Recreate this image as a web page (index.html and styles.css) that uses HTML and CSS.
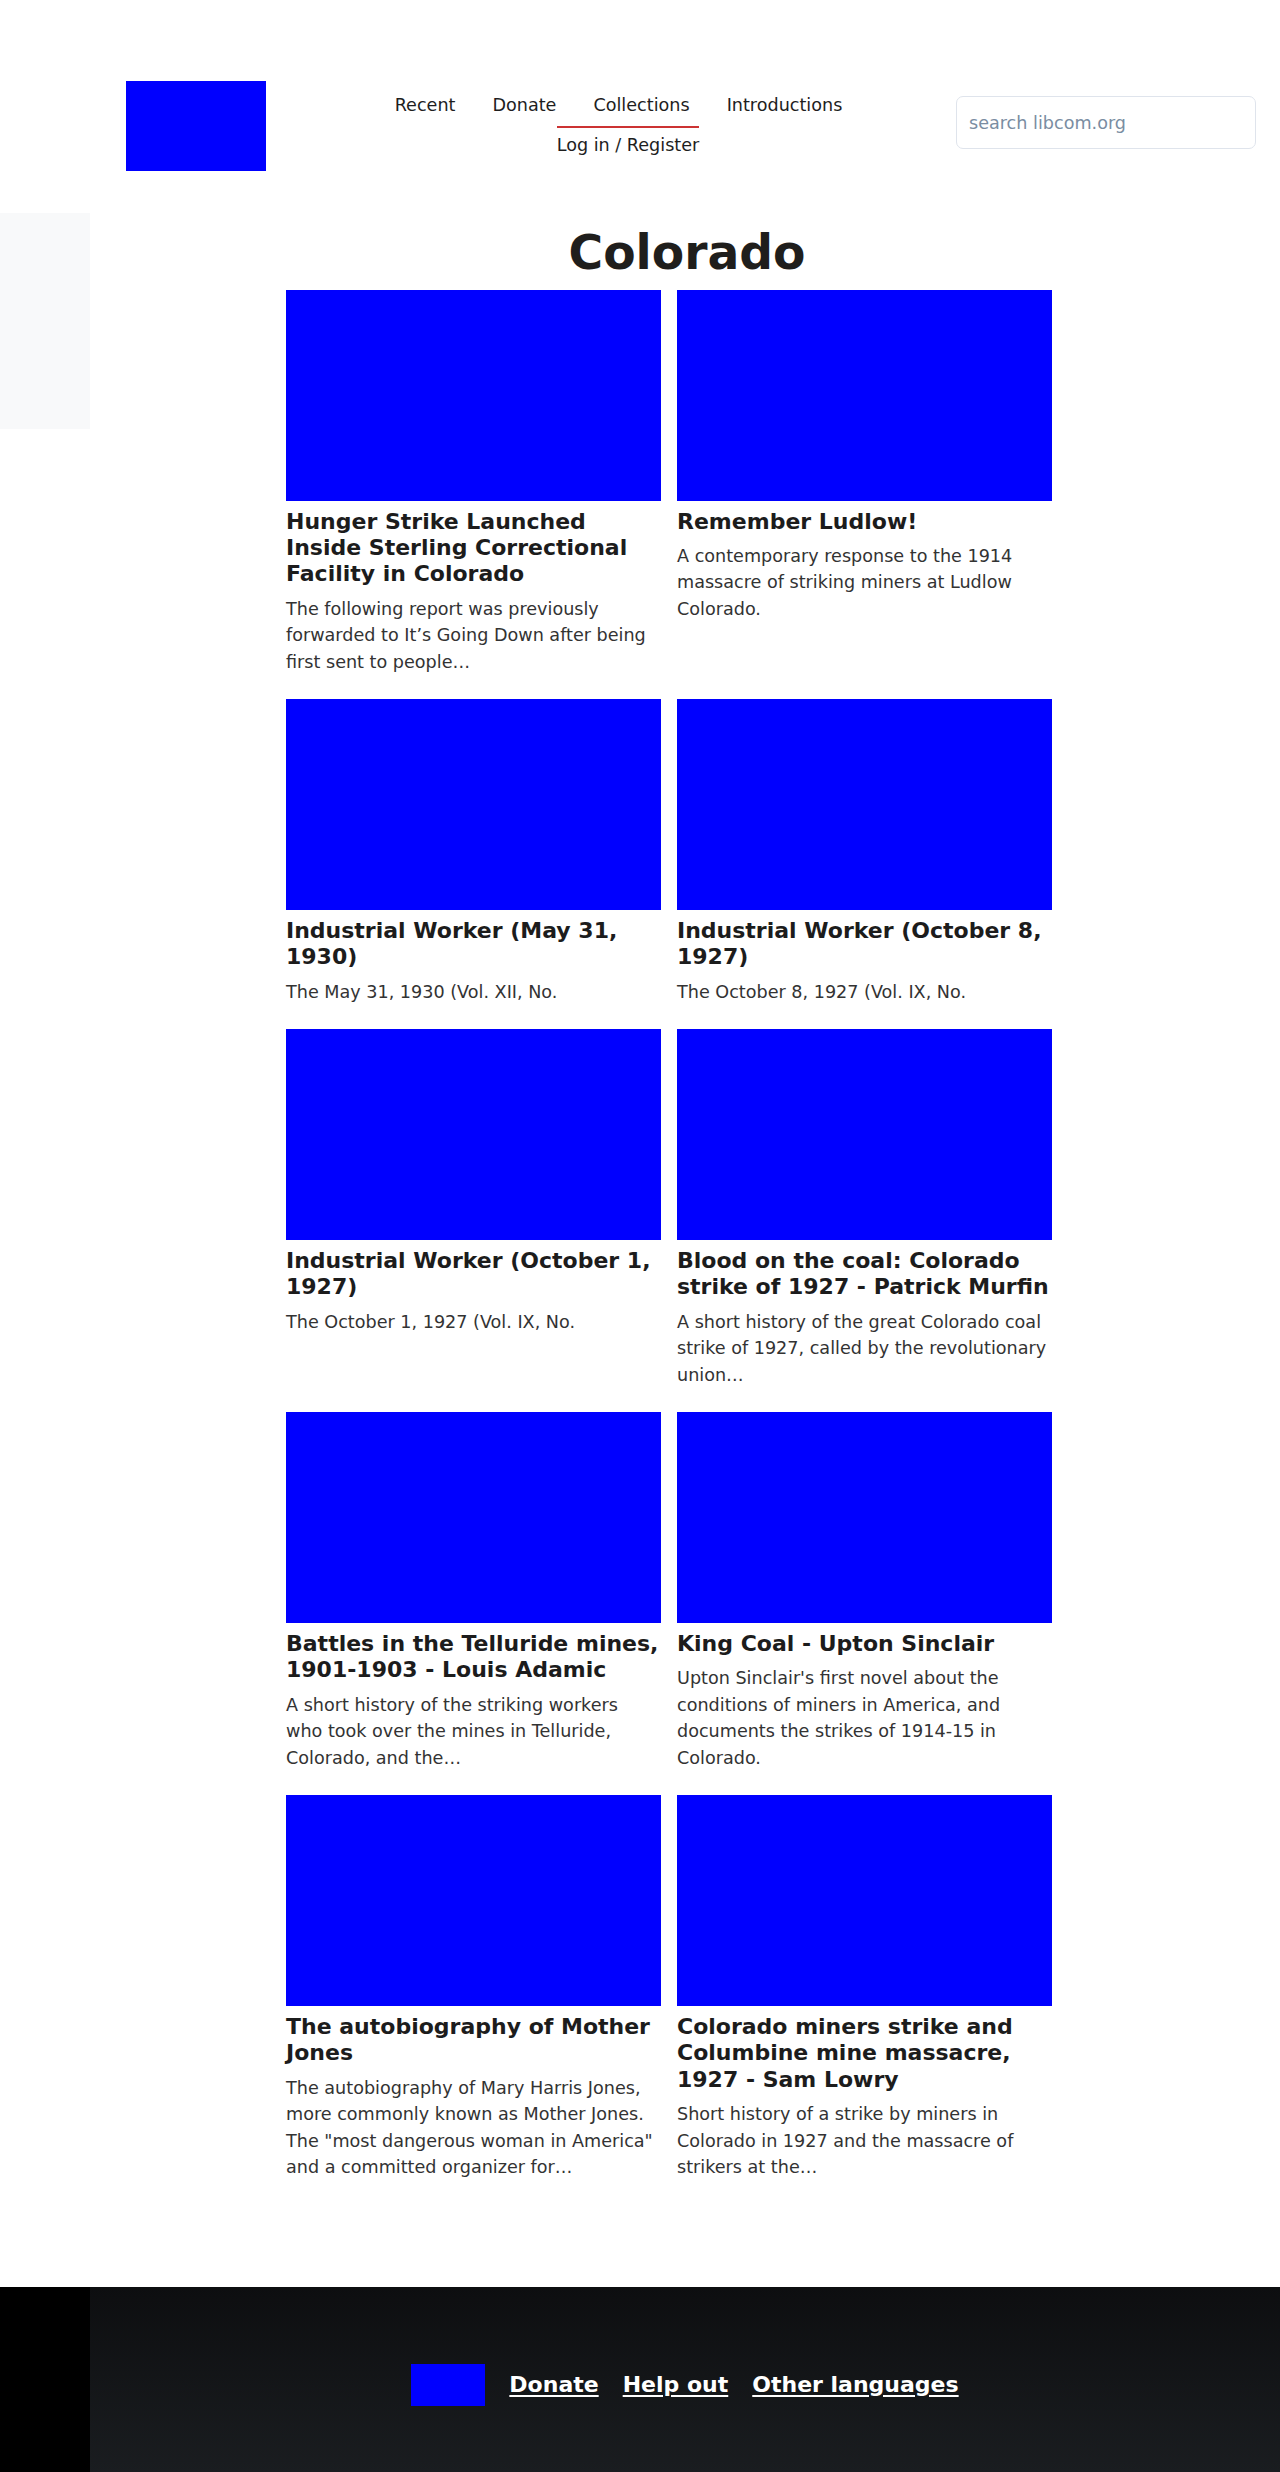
FILE: index.html
```html
<!DOCTYPE html>
<html lang="en">
<head>
<meta charset="utf-8">
<title>Colorado | libcom.org</title>
<link rel="stylesheet" href="styles.css">
</head>
<body>
<header class="site-header">
  <a class="logo" href="#" aria-label="libcom.org"></a>
  <nav class="nav">
    <ul class="nav-main">
      <li><a href="#">Recent</a></li>
      <li><a href="#">Donate</a></li>
      <li><a href="#">Collections</a></li>
      <li><a href="#">Introductions</a></li>
    </ul>
    <a class="nav-account" href="#">Log in / Register</a>
  </nav>
  <form class="search">
    <input class="search-input" type="text" placeholder="search libcom.org">
  </form>
</header>

<div class="page">
  <aside class="sidebar"></aside>
  <main class="main">
    <h1 class="page-title">Colorado</h1>
    <div class="cards">
      <article class="card">
        <div class="card-img"></div>
        <h2 class="card-title">Hunger Strike Launched Inside Sterling Correctional Facility in Colorado</h2>
        <p class="card-text">The following report was previously forwarded to It’s Going Down after being first sent to people…</p>
      </article>
      <article class="card">
        <div class="card-img"></div>
        <h2 class="card-title">Remember Ludlow!</h2>
        <p class="card-text">A contemporary response to the 1914 massacre of striking miners at Ludlow Colorado.</p>
      </article>
      <article class="card">
        <div class="card-img"></div>
        <h2 class="card-title">Industrial Worker (May 31, 1930)</h2>
        <p class="card-text">The May 31, 1930 (Vol. XII, No.</p>
      </article>
      <article class="card">
        <div class="card-img"></div>
        <h2 class="card-title">Industrial Worker (October 8, 1927)</h2>
        <p class="card-text">The October 8, 1927 (Vol. IX, No.</p>
      </article>
      <article class="card">
        <div class="card-img"></div>
        <h2 class="card-title">Industrial Worker (October 1, 1927)</h2>
        <p class="card-text">The October 1, 1927 (Vol. IX, No.</p>
      </article>
      <article class="card">
        <div class="card-img"></div>
        <h2 class="card-title">Blood on the coal: Colorado strike of 1927 - Patrick Murfin</h2>
        <p class="card-text">A short history of the great Colorado coal strike of 1927, called by the revolutionary union…</p>
      </article>
      <article class="card">
        <div class="card-img"></div>
        <h2 class="card-title">Battles in the Telluride mines, 1901-1903 - Louis Adamic</h2>
        <p class="card-text">A short history of the striking workers who took over the mines in Telluride, Colorado, and the…</p>
      </article>
      <article class="card">
        <div class="card-img"></div>
        <h2 class="card-title">King Coal - Upton Sinclair</h2>
        <p class="card-text">Upton Sinclair's first novel about the conditions of miners in America, and documents the strikes of 1914-15 in Colorado.</p>
      </article>
      <article class="card">
        <div class="card-img"></div>
        <h2 class="card-title">The autobiography of Mother Jones</h2>
        <p class="card-text">The autobiography of Mary Harris Jones, more commonly known as Mother Jones. The "most dangerous woman in America" and a committed organizer for…</p>
      </article>
      <article class="card">
        <div class="card-img"></div>
        <h2 class="card-title">Colorado miners strike and Columbine mine massacre, 1927 - Sam Lowry</h2>
        <p class="card-text">Short history of a strike by miners in Colorado in 1927 and the massacre of strikers at the…</p>
      </article>
    </div>
  </main>
</div>

<footer class="site-footer">
  <div class="footer-side"></div>
  <div class="footer-inner">
    <a class="footer-logo" href="#" aria-label="libcom.org"></a>
    <a class="footer-link" href="#">Donate</a>
    <a class="footer-link" href="#">Help out</a>
    <a class="footer-link" href="#">Other languages</a>
  </div>
</footer>
</body>
</html>
```
FILE: styles.css
```css
* { box-sizing: border-box; }

html, body {
  margin: 0;
  padding: 0;
}

body {
  font-family: "DejaVu Sans", "Liberation Sans", sans-serif;
  font-size: 17.6px;
  line-height: 1.5;
  color: #1e1e1e;
  background: #fff;
}

a { color: inherit; text-decoration: none; }

/* Header */
.site-header {
  display: flex;
  align-items: flex-start;
  padding: 81px 24px 0 126px;
  height: 213px;
}

.logo {
  display: block;
  width: 140px;
  height: 90px;
  background: #0000ff;
  flex: none;
}

.nav {
  flex: 1;
  display: flex;
  flex-direction: column;
  align-items: center;
  padding-left: 34px;
  padding-top: 11px;
}

.nav-main {
  list-style: none;
  margin: 0 19px 0 0;
  padding: 0;
  display: flex;
  line-height: 26px;
}

.nav-main a {
  display: block;
  padding: 0 18.5px;
  color: #1e1e1e;
}

.nav-account {
  margin-top: 8px;
  border-top: 2px solid #cc3333;
  padding-top: 4px;
  line-height: 26px;
  color: #1e1e1e;
}

.search {
  margin: 15px 0 0 0;
  flex: none;
}

.search-input {
  display: block;
  width: 300px;
  height: 53px;
  border: 1px solid #dfe4ec;
  border-radius: 7px;
  padding: 0 12px;
  font-family: "DejaVu Sans", sans-serif;
  font-size: 17.6px;
  color: #333;
  background: #fff;
  outline: none;
}

.search-input::placeholder {
  color: #7a8da2;
  opacity: 1;
}

/* Body */
.page {
  display: flex;
  align-items: flex-start;
}

.sidebar {
  flex: none;
  width: 90px;
  height: 216px;
  background: #f8f9fa;
}

.main {
  flex: 1;
  padding-bottom: 107px;
}

.page-title {
  margin: 11px 0 8px;
  padding-left: 4px;
  font-size: 47.2px;
  line-height: 57.6px;
  font-weight: 700;
  text-align: center;
  color: #1f1e1c;
}

.cards {
  display: grid;
  grid-template-columns: 375px 375px;
  column-gap: 16px;
  row-gap: 24px;
  margin-left: 196px;
}

.card-img {
  width: 375px;
  aspect-ratio: 16 / 9;
  background: #0000ff;
}

.card-title {
  margin: 8px 0 8px;
  font-size: 22px;
  line-height: 26.4px;
  font-weight: 700;
  color: #1c1c1c;
}

.card-text {
  margin: 0;
  padding-right: 2.5px;
  font-size: 17.6px;
  line-height: 26.4px;
  color: #333;
}

/* Footer */
.site-footer {
  display: flex;
  height: 185px;
}

.footer-side {
  width: 90px;
  flex: none;
  background: #000;
}

.footer-inner {
  flex: 1;
  display: flex;
  align-items: center;
  justify-content: center;
  gap: 24px;
  padding-top: 10px;
  background: linear-gradient(180deg, #0d0e10 0%, #1a1d20 100%);
}

.footer-logo {
  display: block;
  width: 74px;
  height: 42px;
  background: #0000ff;
}

.footer-link {
  color: #fff;
  font-weight: 700;
  font-size: 22px;
  line-height: 26px;
  text-decoration: underline;
  text-underline-offset: 3px;
}
```
